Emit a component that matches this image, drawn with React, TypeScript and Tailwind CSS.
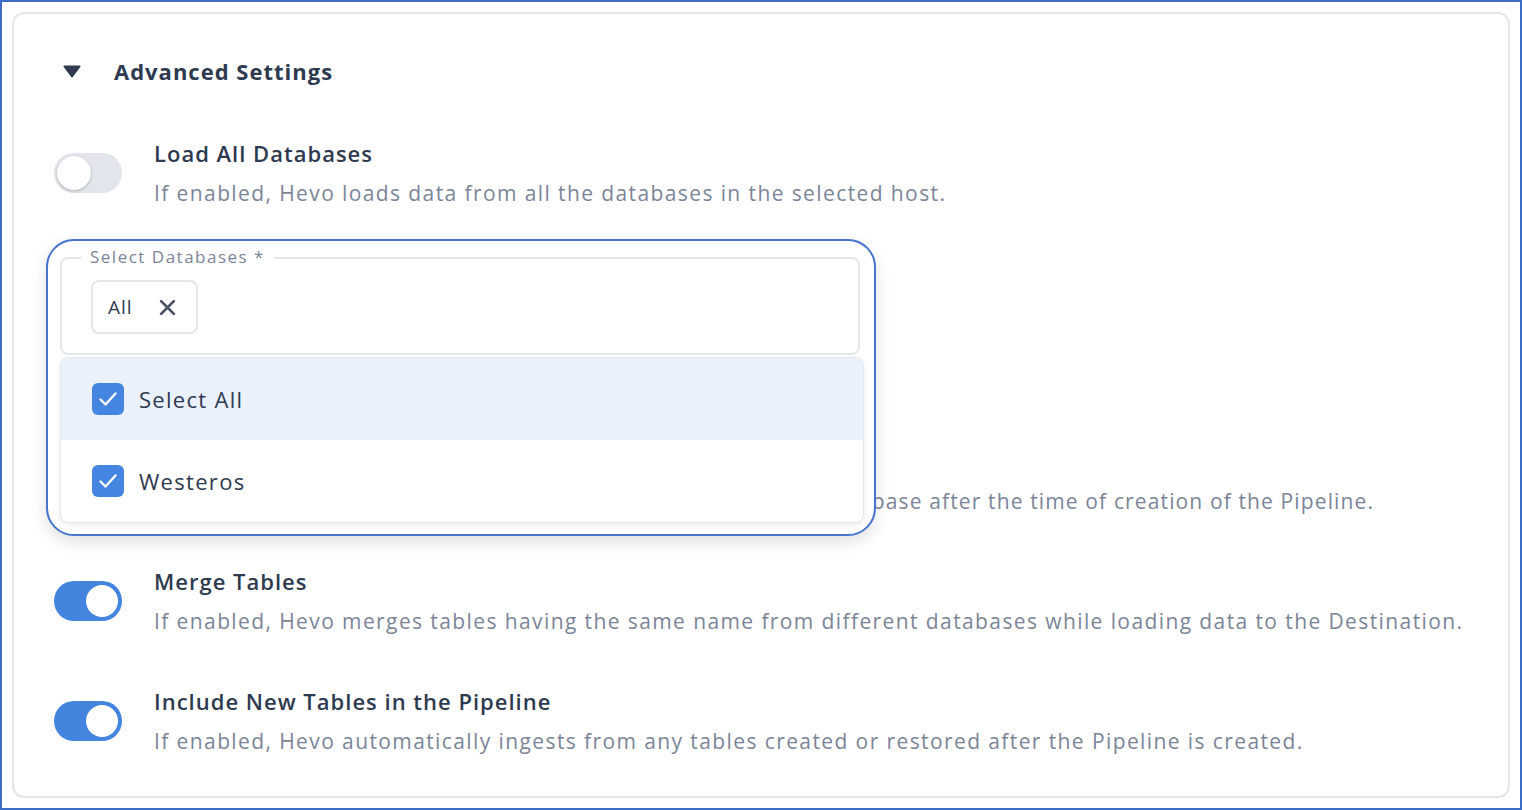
import React from "react";

type RowProps = {
  title: string;
  description: string;
  enabled: boolean;
  tight?: boolean;
};

function Toggle({ enabled }: { enabled: boolean }) {
  return (
    <div
      className={
        enabled
          ? "w-[68px] h-[40px] rounded-full bg-[#4384df] flex items-center justify-end px-[4px] shrink-0"
          : "w-[68px] h-[40px] rounded-full bg-[#e2e5eb] flex items-center justify-start px-[3px] shrink-0"
      }
    >
      <div
        className={
          enabled
            ? "w-[32px] h-[32px] rounded-full bg-white"
            : "w-[34px] h-[34px] rounded-full bg-white shadow-[0_1px_3px_rgba(0,0,0,0.25)]"
        }
      />
    </div>
  );
}

function SettingRow({ title, description, enabled, tight }: RowProps) {
  return (
    <div className="flex items-center h-[80px]">
      <Toggle enabled={enabled} />
      <div className="ml-[32px] whitespace-nowrap">
        <p className="text-[22px] leading-[40px] font-semibold tracking-[1px] text-[#2e3a4f]">{title}</p>
        <p
          className={
            tight
              ? "text-[21px] leading-[40px] tracking-[1.13px] text-[#7b8598]"
              : "text-[21px] leading-[40px] tracking-[1.4px] text-[#7b8598]"
          }
        >
          {description}
        </p>
      </div>
    </div>
  );
}

function Checkbox() {
  return (
    <div className="w-[32px] h-[32px] rounded-[6px] bg-[#4485e1] flex items-center justify-center">
      <svg width="24" height="24" viewBox="0 0 24 24" fill="none">
        <path
          d="M4.5 12.5 L9.5 17.5 L19.5 6.5"
          stroke="white"
          strokeWidth="2.4"
          strokeLinecap="round"
          strokeLinejoin="round"
        />
      </svg>
    </div>
  );
}

function SelectDatabases() {
  return (
    <div className="relative ml-[6px] w-[800px] h-[98px] mt-[44px]">
      <div className="absolute -top-[18px] -left-[14px] w-[830px] h-[297px] rounded-[28px] border-2 border-[#4774cf] bg-white shadow-[0_6px_16px_rgba(0,0,0,0.12)] pt-[16px] pl-[12px] pr-[12px] z-10">
        <div className="relative w-[800px] h-[98px] rounded-[8px] border-2 border-[#e3e7ec] pt-[21px] pl-[29px]">
          <span className="absolute -top-[13px] left-[19px] bg-white px-[9px] text-[17px] leading-[22px] tracking-[1.5px] text-[#7b8598]">
            Select Databases *
          </span>
          <div className="inline-flex items-center h-[54px] pl-[15px] pr-[20px] rounded-[8px] border-2 border-[#e3e7ec] gap-[26px]">
            <span className="text-[19px] tracking-[1px] text-[#2e3a4f]">All</span>
            <svg width="17" height="17" viewBox="0 0 16 16">
              <path d="M2 2 L14 14 M14 2 L2 14" stroke="#4a5263" strokeWidth="2.6" strokeLinecap="round" />
            </svg>
          </div>
        </div>
        <div className="w-[804px] mt-[2px] rounded-[8px] border border-[#e3e7ec] bg-white overflow-hidden shadow-[0_2px_6px_rgba(0,0,0,0.08)]">
          <div className="flex items-center h-[82px] bg-[#eaf1fb] pl-[31px] gap-[15px]">
            <Checkbox />
            <span className="text-[22px] tracking-[1.3px] text-[#2e3a4f]">Select All</span>
          </div>
          <div className="flex items-center h-[82px] pl-[31px] gap-[15px]">
            <Checkbox />
            <span className="text-[22px] tracking-[1.3px] text-[#2e3a4f]">Westeros</span>
          </div>
        </div>
      </div>
    </div>
  );
}

export default function App() {
  return (
    <div
      className="w-[1522px] h-[810px] border-2 border-[#3d6cc7] bg-white p-[10px] overflow-hidden"
      style={{ fontFamily: '"Open Sans", "Noto Sans", sans-serif' }}
    >
      <div className="h-full rounded-[12px] border-2 border-[#e3e7ec] pl-[40px] pt-[37px]">
        <div className="flex items-center h-[40px]">
          <svg width="18" height="13" viewBox="0 0 18 13" className="ml-[9px]">
            <path d="M1.5 1.5 H16.5 L9 11.5 Z" fill="#2e3a4f" stroke="#2e3a4f" strokeWidth="2" strokeLinejoin="round" />
          </svg>
          <h2 className="ml-[33px] text-[22px] font-bold tracking-[1px] text-[#2e3a4f]">Advanced Settings</h2>
        </div>
        <div className="mt-[42px]">
          <SettingRow
            enabled={false}
            title="Load All Databases"
            description="If enabled, Hevo loads data from all the databases in the selected host."
          />
        </div>
        <SelectDatabases />
        <div className="mt-[86px]">
          <SettingRow
            enabled={true}
            tight
            title="Load Historical Data"
            description="If disabled, Hevo loads only the data that was written to your database after the time of creation of the Pipeline."
          />
        </div>
        <div className="mt-[40px]">
          <SettingRow
            enabled={true}
            title="Merge Tables"
            description="If enabled, Hevo merges tables having the same name from different databases while loading data to the Destination."
          />
        </div>
        <div className="mt-[40px]">
          <SettingRow
            enabled={true}
            title="Include New Tables in the Pipeline"
            description="If enabled, Hevo automatically ingests from any tables created or restored after the Pipeline is created."
          />
        </div>
      </div>
    </div>
  );
}
